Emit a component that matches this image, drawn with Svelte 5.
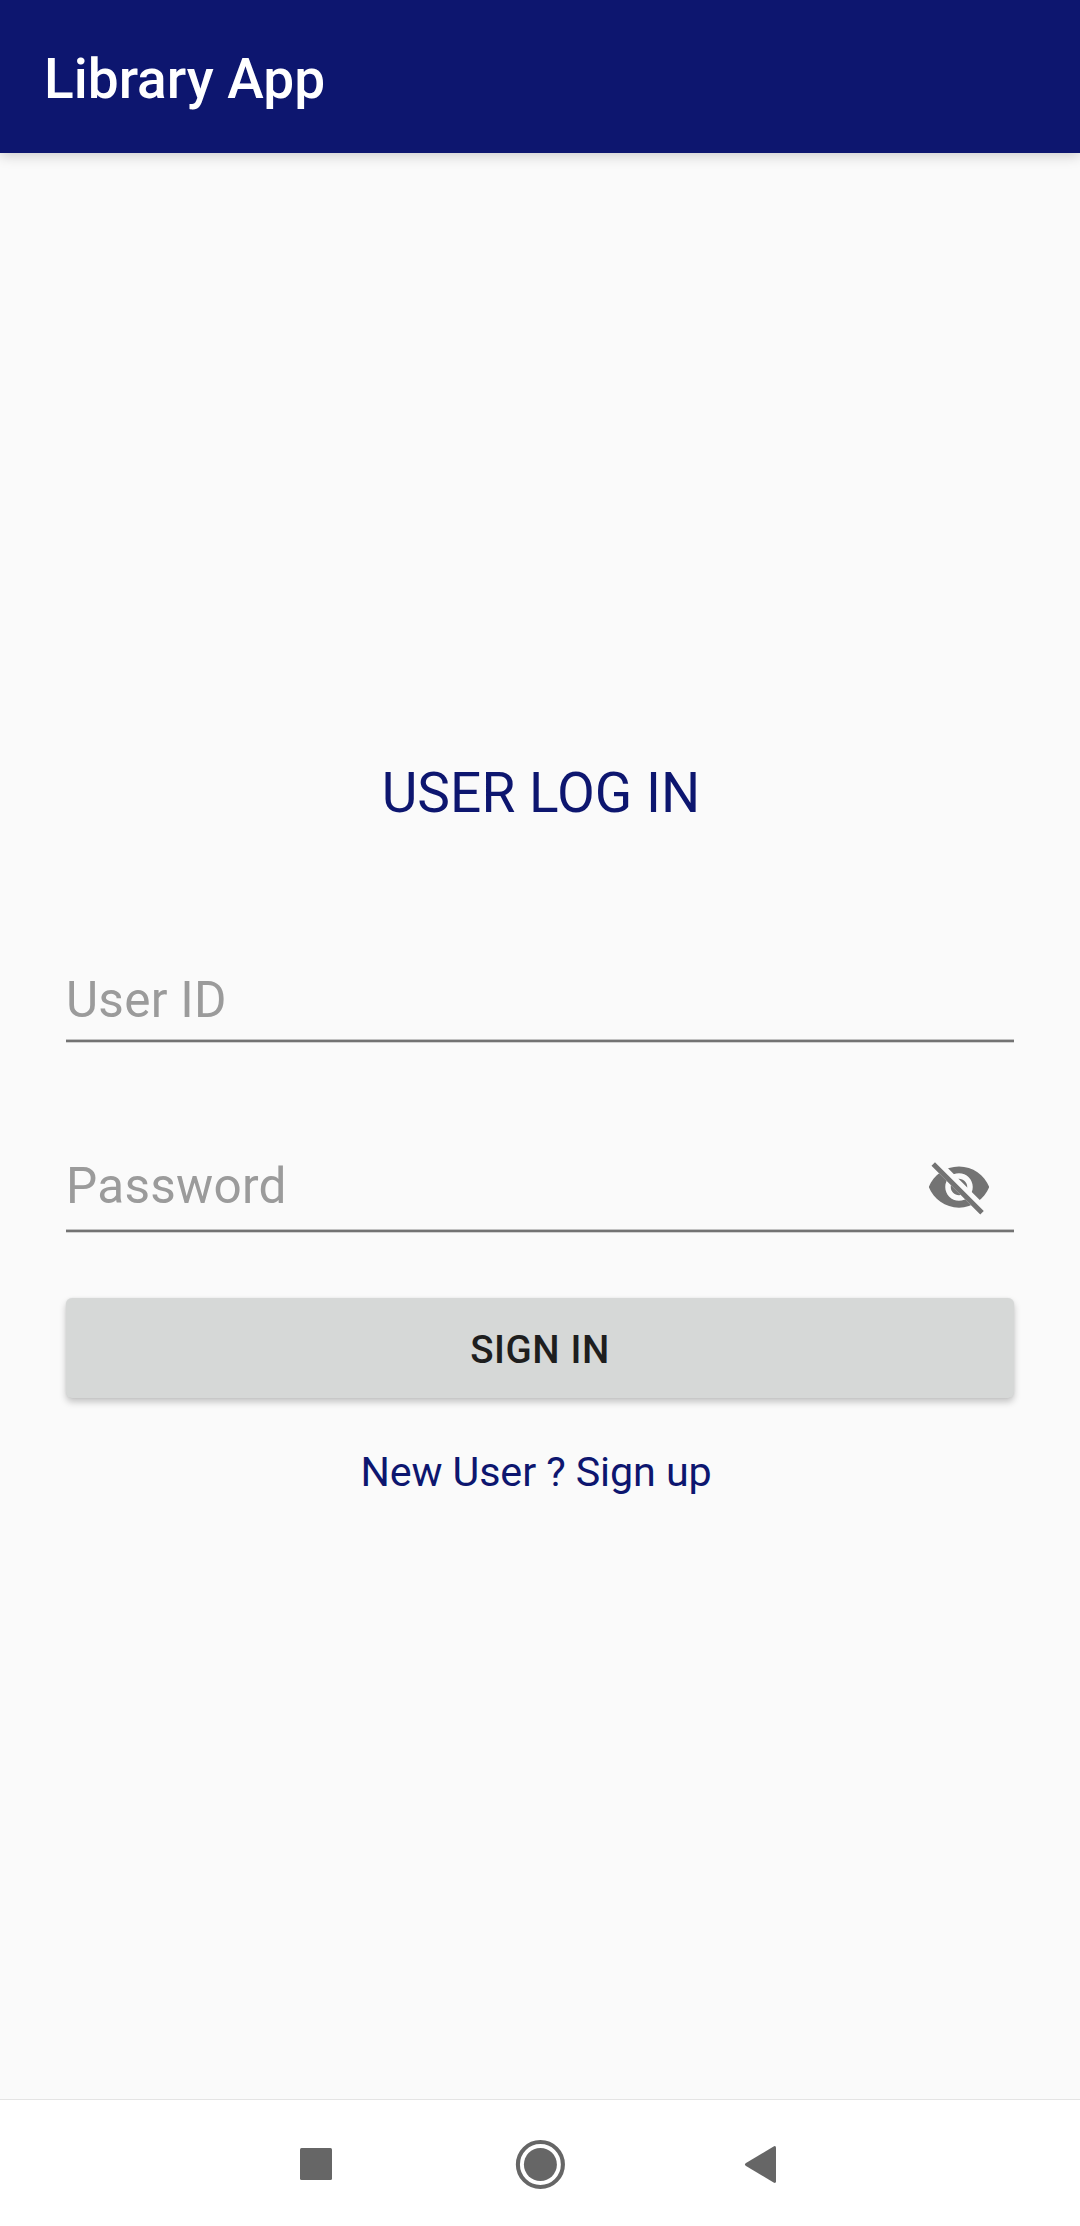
<script>
  let userId = $state('');
  let password = $state('');
</script>

<div class="screen">
  <header class="app-bar"><h1>Library App</h1></header>

  <main>
    <h2>USER LOG IN</h2>
    <div class="field user">
      <input type="text" placeholder="User ID" bind:value={userId} />
    </div>
    <div class="field password">
      <input type="password" placeholder="Password" bind:value={password} />
      <button class="toggle" aria-label="Show password">
        <svg viewBox="0 0 24 24" width="66" height="66">
          <clipPath id="strike-gap">
            <path d="M2 4.27 19.73 22 22.27 19.46 4.54 1.73V1H23V23H1V4.27Z" />
          </clipPath>
          <path
            clip-path="url(#strike-gap)"
            fill="#737373"
            d="M12 4.5C7 4.5 2.73 7.61 1 12c1.73 4.39 6 7.5 11 7.5s9.27-3.11 11-7.5c-1.73-4.39-6-7.5-11-7.5zM12 17c-2.76 0-5-2.24-5-5s2.24-5 5-5 5 2.24 5 5-2.24 5-5 5zM12 9c-1.66 0-3 1.34-3 3s1.34 3 3 3 3-1.34 3-3-1.34-3-3-3z"
          />
          <path d="M3.27 4.27 19.74 20.74" stroke="#737373" stroke-width="1.8" stroke-linecap="square" />
        </svg>
      </button>
    </div>
    <button class="sign-in">SIGN IN</button>
    <p class="sign-up">New User ? Sign up</p>
  </main>

  <nav>
    <svg viewBox="0 0 60 60" width="60" height="60" fill="#666">
      <rect x="14" y="11" width="32" height="32" rx="1.5" />
    </svg>
    <svg viewBox="0 0 60 60" width="60" height="60" fill="#666">
      <circle cx="30.4" cy="27.5" r="22.5" fill="none" stroke="#666" stroke-width="4.1" />
      <circle cx="30.4" cy="27.5" r="16.5" />
    </svg>
    <svg viewBox="0 0 60 60" width="60" height="60" fill="#666">
      <path d="M12 26 39.6 9.4Q42 8.4 42 10.7V44.3Q42 46.6 39.6 45.6L12 29Q9.8 27.5 12 26Z" />
    </svg>
  </nav>
</div>

<style>
  :global(body) {
    margin: 0;
  }
  .screen {
    display: flex;
    flex-direction: column;
    width: 1080px;
    height: 2226px;
    background: #fafafa;
    font-family: Roboto, sans-serif;
    overflow: hidden;
  }
  h1,
  h2,
  p {
    margin: 0;
  }
  .app-bar {
    box-sizing: border-box;
    height: 153px;
    padding: 47px 44px 0;
    background: #0d166f;
    color: #fff;
    box-shadow: 0 3px 12px rgba(0, 0, 0, 0.18);
  }
  h1 {
    font-size: 55px;
    font-weight: 500;
    line-height: 64px;
  }
  main {
    flex: 1;
    display: flex;
    flex-direction: column;
    padding: 608px 66px 0;
  }
  h2 {
    height: 64px;
    padding-left: 2px;
    color: #0d166f;
    font-size: 55px;
    font-weight: 400;
    line-height: 64px;
    letter-spacing: 0.05px;
    text-align: center;
  }
  .field {
    box-sizing: border-box;
    display: flex;
    align-items: center;
    background: linear-gradient(
        #c2c2c2 1px,
        #737373 1px,
        #737373 3px,
        #d2d2d2 3px
      )
      bottom / 100% 4px no-repeat;
  }
  .user {
    height: 103px;
    margin-top: 115px;
    padding-top: 17px;
  }
  .password {
    height: 112px;
    margin-top: 78px;
    padding: 20px 22px 0 0;
  }
  input {
    flex: 1;
    min-width: 0;
    height: 66px;
    padding: 0;
    border: 0;
    outline: 0;
    background: none;
    color: #212121;
    font: 400 49.5px/66px Roboto, sans-serif;
    letter-spacing: 0.25px;
  }
  .password input {
    margin-bottom: 2px;
  }
  input::placeholder {
    color: #9b9b9b;
    opacity: 1;
  }
  .toggle {
    display: flex;
    padding: 0;
    border: 0;
    background: none;
  }
  .sign-in {
    height: 100px;
    margin-top: 65px;
    padding: 4px 0 0;
    border: 0;
    border-radius: 6px;
    background: #d6d8d7;
    box-shadow:
      0 4px 7px rgba(0, 0, 0, 0.22),
      0 0 2px rgba(0, 0, 0, 0.08);
    color: #1e1e1e;
    font: 500 38.5px/96px Roboto, sans-serif;
    letter-spacing: 0.6px;
  }
  .sign-up {
    margin: 50px 8px 0 0;
    color: #0d166f;
    font-size: 41.25px;
    line-height: 48px;
    letter-spacing: -0.1px;
    text-align: center;
  }
  nav {
    box-sizing: border-box;
    display: flex;
    gap: 164px;
    height: 127px;
    padding: 37px 0 0 286px;
    border-top: 1px solid #e4e4e4;
    background: #fff;
  }
</style>
